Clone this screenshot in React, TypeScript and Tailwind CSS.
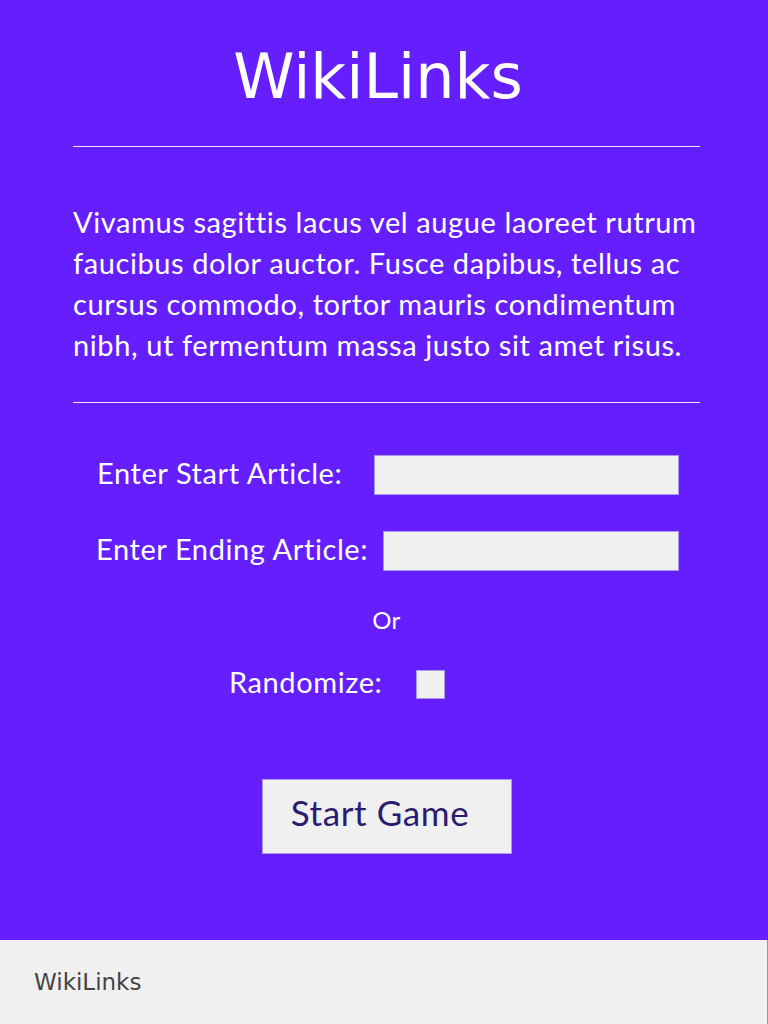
export default function App() {
  const body = { fontFamily: "Lato, 'Noto Sans', sans-serif" };
  const title = { fontFamily: "'DejaVu Sans', 'Liberation Sans', sans-serif" };
  return (
    <div className="w-[768px] h-[1024px] flex flex-col overflow-hidden">
      <main className="h-[940px] bg-[#651fff] text-white [font-variant-ligatures:none]" style={body}>
        <div className="ml-[73px] w-[627px] flex flex-col">
          <h1 className="text-center text-[62px] leading-[74px] mt-[40px] pr-[17px] text-white" style={title}>WikiLinks</h1>
          <div className="mt-[32px] h-px bg-[#efe6ff]" />
          <p className="mt-[54px] text-[29px] leading-[41px] tracking-[0.6px] whitespace-nowrap">
            Vivamus sagittis lacus vel augue laoreet rutrum<br />
            faucibus dolor auctor. Fusce dapibus, tellus ac<br />
            cursus commodo, tortor mauris condimentum<br />
            nibh, ut fermentum massa justo sit amet risus.
          </p>
          <div className="mt-[37px] h-px bg-[#efe6ff]" />
          <div className="mt-[52px] ml-[23px] w-[583px] flex flex-col gap-[36px]">
            <div className="flex items-center justify-between h-[40px]">
              <label className="text-[29px] leading-[40px] tracking-[0.6px] pl-[1px] pb-[5px]">Enter Start Article:</label>
              <input type="text" className="w-[305px] h-[40px] bg-[#f0f0f0] border border-[#a898e6] outline-none" />
            </div>
            <div className="flex items-center justify-between h-[40px]">
              <label className="text-[29px] leading-[40px] tracking-[0.6px] pb-[5px]">Enter Ending Article:</label>
              <input type="text" className="w-[296px] h-[40px] bg-[#f0f0f0] border border-[#a898e6] outline-none" />
            </div>
          </div>
          <div className="mt-[35px] text-center text-[24px] leading-[28px] tracking-[0.3px]">Or</div>
          <div className="mt-[35px] pl-[156px] flex items-center h-[30px]">
            <span className="w-[187px] text-[29px] leading-[30px] tracking-[0.6px] pb-[4px]">Randomize:</span>
            <span className="w-[29px] h-[29px] bg-[#f0f0f0] border border-[#a898e6] inline-block" />
          </div>
          <div className="mt-[80px] flex justify-center">
            <button className="ml-[1px] w-[250px] h-[75px] bg-[#f0f0f0] border border-[#a898e6] text-[35px] tracking-[0.6px] text-[#2a1b73] pr-[14px] pb-[8px]">
              Start Game
            </button>
          </div>
        </div>
      </main>
      <footer className="h-[84px] bg-[#f0f0f0] border-r border-[#a08ad8] flex items-center pl-[34px]">
        <span className="text-[23px] text-[#444444]" style={title}>WikiLinks</span>
      </footer>
    </div>
  );
}
